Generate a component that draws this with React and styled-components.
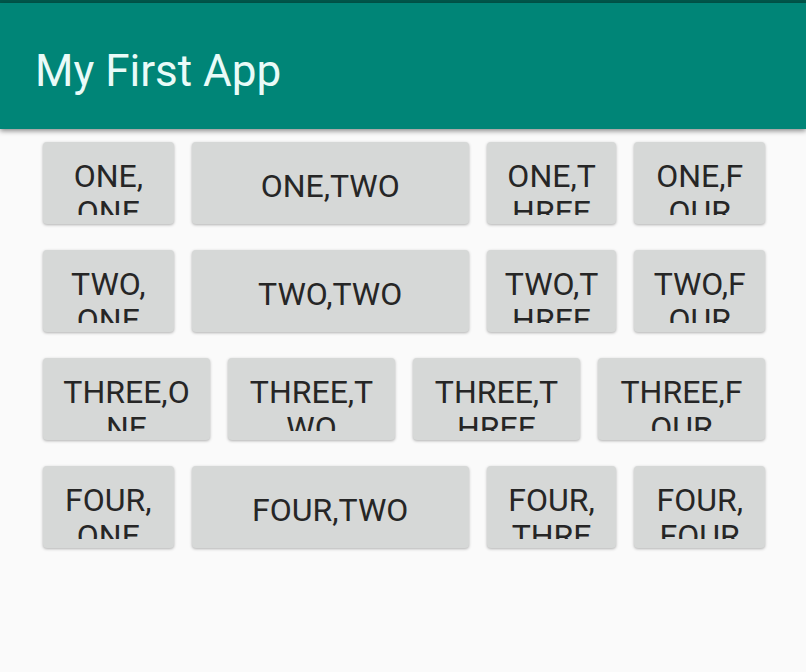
import React from "react";
import styled, { createGlobalStyle } from "styled-components";

const GlobalStyle = createGlobalStyle`
  *, *::before, *::after { box-sizing: border-box; }
  body {
    margin: 0;
    background: #fafafa;
    font-family: Roboto, "Liberation Sans", sans-serif;
  }
`;

const StatusStrip = styled.div`
  height: 3px;
  background: #00574b;
`;

const AppBar = styled.header`
  display: flex;
  align-items: center;
  min-height: 126px;
  padding: 10px 35px 0;
  background: #008577;
  box-shadow: 0 2px 5px rgba(0, 0, 0, 0.45);
`;

const Title = styled.h1`
  margin: 0;
  color: #e9fbf8;
  font-size: 44px;
  font-weight: 400;
  line-height: 56px;
`;

const Table = styled.main`
  display: grid;
  gap: 26px;
  padding: 13px 41px 40px 43px;
`;

const Row = styled.div`
  display: grid;
  grid-template-columns: ${(p) => (p.$even ? "repeat(4, 1fr)" : "131fr 278fr 130fr 131fr")};
  gap: 18px;
`;

const CellButton = styled.button`
  display: flex;
  flex-direction: column;
  justify-content: ${(p) => (p.$single ? "center" : "flex-start")};
  min-width: 0;
  height: 82px;
  padding: ${(p) => (p.$single ? "6px 0 0" : "16px 0 0")};
  border: 0;
  border-radius: 4px;
  background: #d6d8d7;
  color: #262626;
  font-family: inherit;
  font-size: 32px;
  font-weight: 400;
  line-height: 36px;
  box-shadow: 0 1px 3px rgba(0, 0, 0, 0.3);
`;

const Label = styled.span`
  display: block;
  width: 100%;
  max-height: 57px;
  overflow: ${(p) => (p.$single ? "visible" : "hidden")};
  text-align: center;
  white-space: pre;
`;

const rows = [
  { cells: ["ONE,\nONE", "ONE,TWO", "ONE,T\nHREE", "ONE,F\nOUR"] },
  { cells: ["TWO,\nONE", "TWO,TWO", "TWO,T\nHREE", "TWO,F\nOUR"] },
  { even: true, cells: ["THREE,O\nNE", "THREE,T\nWO", "THREE,T\nHREE", "THREE,F\nOUR"] },
  { cells: ["FOUR,\nONE", "FOUR,TWO", "FOUR,\nTHRE", "FOUR,\nFOUR"] },
];

function Cell({ text }) {
  const single = !text.includes("\n");
  return (
    <CellButton type="button" $single={single}>
      <Label $single={single}>{text}</Label>
    </CellButton>
  );
}

export default function App() {
  return (
    <>
      <GlobalStyle />
      <StatusStrip />
      <AppBar>
        <Title>My First App</Title>
      </AppBar>
      <Table>
        {rows.map((row) => (
          <Row key={row.cells[0]} $even={row.even}>
            {row.cells.map((text) => (
              <Cell key={text} text={text} />
            ))}
          </Row>
        ))}
      </Table>
    </>
  );
}
